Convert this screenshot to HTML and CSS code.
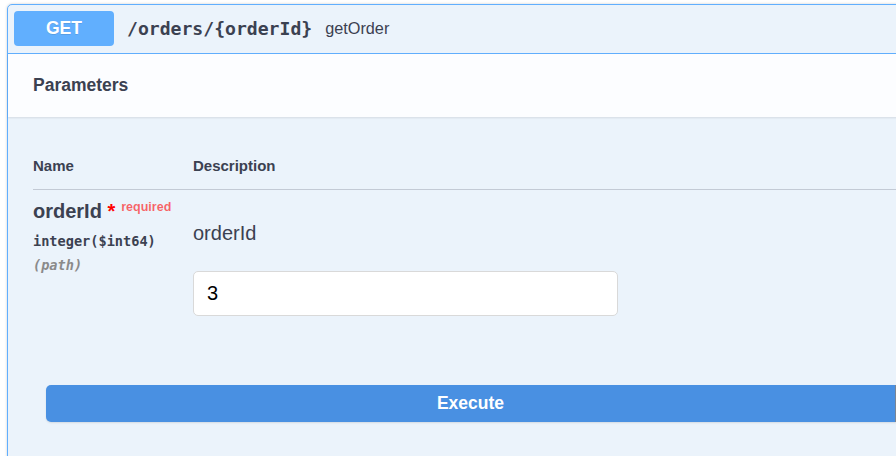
FILE: index.html
```html
<!DOCTYPE html>
<html>
<head>
<meta charset="utf-8">
<link rel="stylesheet" href="styles.css">
</head>
<body>
<div class="page">
  <div class="opblock">
    <div class="summary">
      <span class="method">GET</span>
      <span class="path">/orders/{orderId}</span>
      <span class="summary-desc">getOrder</span>
    </div>
    <div class="section-header">
      <h4 class="title">Parameters</h4>
    </div>
    <div class="params">
      <div class="thead">
        <div class="col-name">Name</div>
        <div class="col-desc">Description</div>
      </div>
      <div class="row">
        <div class="col-name cell-name">
          <div class="param-name">orderId<span class="star">&nbsp;*</span><span class="req">required</span></div>
          <div class="param-type">integer($int64)</div>
          <div class="param-in">(path)</div>
        </div>
        <div class="col-desc cell-desc">
          <p class="markdown">orderId</p>
          <input class="field" type="text" value="3">
        </div>
      </div>
    </div>
    <div class="execute-wrapper">
      <button class="execute">Execute</button>
    </div>
  </div>
</div>
</body>
</html>
```
FILE: styles.css
```css
html, body {
  margin: 0;
  padding: 0;
  background: #ffffff;
  overflow: hidden;
  width: 896px;
  height: 456px;
}
body {
  font-family: "Liberation Sans", Arial, sans-serif;
  color: #3b4151;
}
.page {
  padding: 4px 0 0 7px;
}
.opblock {
  width: 927px;
  min-height: 520px;
  box-sizing: border-box;
  border: 1px solid #61affe;
  border-radius: 5px;
  background: #ebf3fb;
  box-shadow: 0 0 3px rgba(0, 0, 0, .19);
}
.summary {
  display: flex;
  align-items: center;
  padding: 6px 6px 7px;
  border-bottom: 1px solid #61affe;
}
.method {
  width: 100px;
  height: 35px;
  display: flex;
  align-items: center;
  justify-content: center;
  background: #61affe;
  color: #ffffff;
  border-radius: 4px;
  font-weight: bold;
  font-size: 17.5px;
  text-shadow: 0 1px 0 rgba(0,0,0,.1);
}
.path {
  margin-left: 13px;
  font-family: "DejaVu Sans Mono", monospace;
  font-weight: bold;
  font-size: 18.1px;
  color: #3b4151;
}
.summary-desc {
  margin-left: 13px;
  font-size: 16.25px;
  color: #3b4151;
}
.section-header {
  height: 63px;
  padding: 0 25px;
  display: flex;
  align-items: center;
  background: #fcfdff;
  box-shadow: 0 1px 2px rgba(0, 0, 0, .1);
}
.title {
  margin: 0;
  font-size: 17.5px;
  font-weight: bold;
  color: #3b4151;
}
.params {
  padding: 40px 0 0 25px;
}
.thead {
  display: flex;
  font-size: 15px;
  line-height: 18px;
  font-weight: bold;
  padding-bottom: 14px;
  border-bottom: 1px solid #c3cad5;
}
.col-name {
  width: 160px;
  flex: none;
}
.col-desc {
  flex: 1;
}
.row {
  display: flex;
}
.cell-name {
  padding-top: 10px;
}
.param-name {
  font-size: 20px;
  line-height: 23px;
  font-weight: bold;
  white-space: nowrap;
}
.star {
  color: #ff0000;
}
.req {
  position: relative;
  top: -7.5px;
  padding-left: 6px;
  font-size: 12.5px;
  font-weight: bold;
  color: rgba(255, 0, 0, .6);
}
.param-type {
  margin-top: 6px;
  font-family: "DejaVu Sans Mono", monospace;
  font-weight: bold;
  font-size: 13.6px;
  line-height: 18px;
  color: #3b4151;
}
.param-in {
  margin-top: 6px;
  font-family: "DejaVu Sans Mono", monospace;
  font-weight: bold;
  font-style: italic;
  font-size: 13.6px;
  line-height: 18px;
  color: #8a8a8a;
}
.cell-desc {
  padding-top: 32px;
  display: flex;
  flex-direction: column;
  align-items: flex-start;
}
.markdown {
  margin: 0;
  font-size: 20px;
  line-height: 23px;
  color: #3b4151;
}
.field {
  margin-top: 26px;
  width: 425px;
  height: 45px;
  box-sizing: border-box;
  padding: 0 13px;
  border: 1px solid #d9d9d9;
  border-radius: 5px;
  background: #ffffff;
  font-family: "Liberation Sans", Arial, sans-serif;
  font-size: 20px;
  color: #000000;
  outline: none;
}
.execute-wrapper {
  padding: 69px 0 0 38px;
}
.execute {
  display: block;
  width: 850px;
  height: 37px;
  border: none;
  border-right: 1px solid #7a8594;
  border-radius: 5px 0 0 5px;
  background: #4990e2;
  color: #ffffff;
  font-family: "Liberation Sans", Arial, sans-serif;
  font-size: 17.5px;
  font-weight: bold;
  box-shadow: 0 1px 2px rgba(0, 0, 0, .1);
  padding: 0;
}
```
